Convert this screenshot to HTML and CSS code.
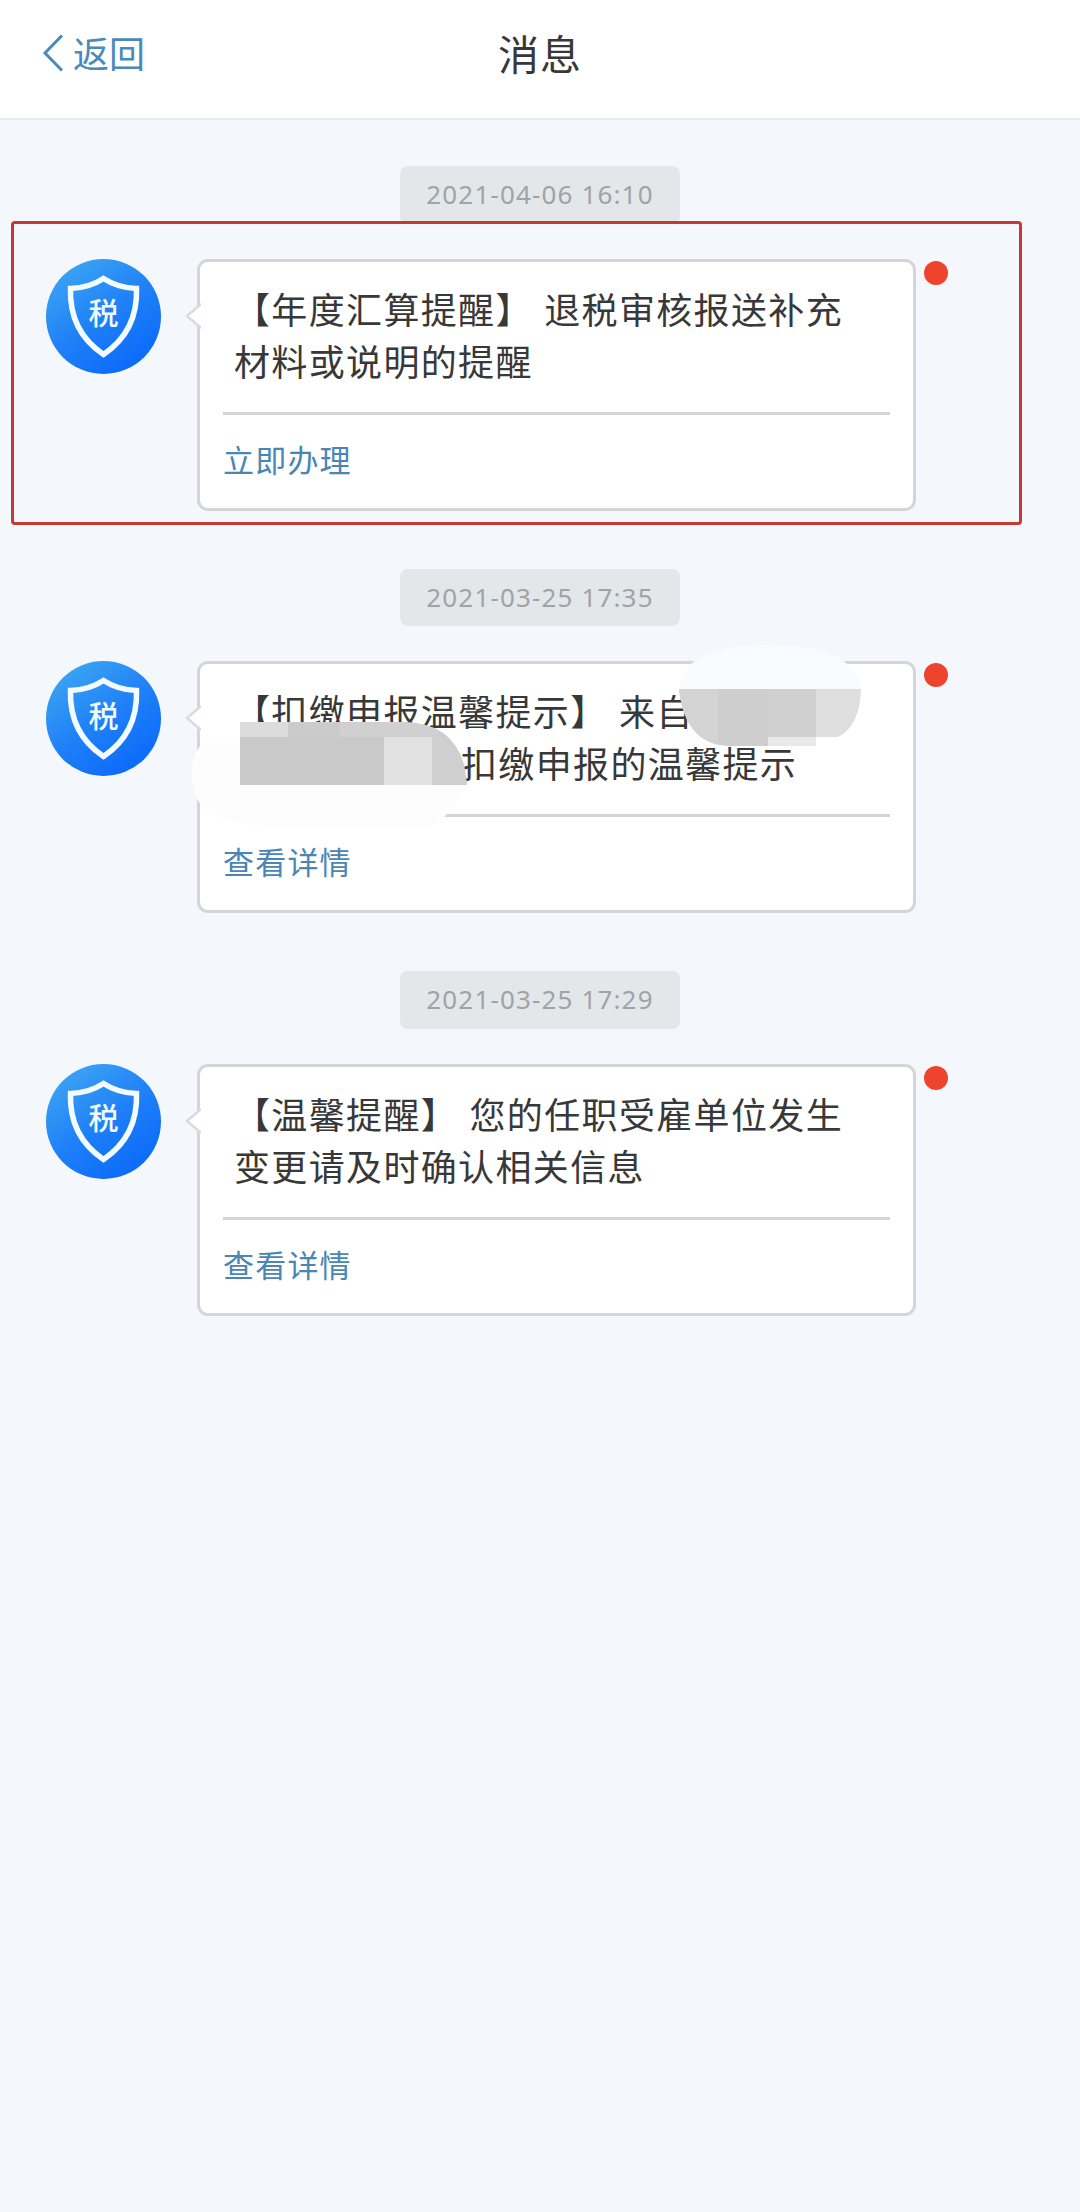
FILE: index.html
```html
<!DOCTYPE html>
<html lang="zh-CN">
<head>
<meta charset="utf-8">
<title>消息</title>
<link rel="stylesheet" href="styles.css">
</head>
<body>
<svg class="defs" width="0" height="0" aria-hidden="true">
  <defs>
    <symbol id="shield" viewBox="0 0 115 115">
      <path d="M57.5 19.5 Q72 29 90.5 29.5 Q92 72 57.5 95.5 Q23 72 24.500 29.5 Q43 29 57.5 19.500Z" fill="none" stroke="#f2fbff" stroke-width="5.500"/>
    </symbol>
  </defs>
</svg>
<header class="topbar">
  <a class="back">
    <svg class="back-icon" viewBox="0 0 22 38"><path d="M20 1.500 L3 19 L20 36.500" fill="none" stroke="currentColor" stroke-width="3"/></svg>
    <span>返回</span>
  </a>
  <h1 class="title">消息</h1>
</header>
<main class="feed">
  <section class="entry">
    <time class="stamp">2021-04-06 16:10</time>
    <div class="message">
      <div class="avatar"><svg class="shield"><use href="#shield"/></svg><span>税</span></div>
      <article class="card">
        <svg class="tail" viewBox="0 0 16 26"><path d="M16 1 L2 13 L16 25" fill="#fff" stroke="#d9dcdf" stroke-width="2.500"/></svg>
        <p class="text">【年度汇算提醒】 退税审核报送补充<br>材料或说明的提醒</p>
        <a class="action">立即办理</a>
      </article>
      <i class="unread"></i>
    </div>
    <div class="highlight"></div>
  </section>
  <section class="entry">
    <time class="stamp">2021-03-25 17:35</time>
    <div class="message">
      <div class="avatar"><svg class="shield"><use href="#shield"/></svg><span>税</span></div>
      <article class="card">
        <svg class="tail" viewBox="0 0 16 26"><path d="M16 1 L2 13 L16 25" fill="#fff" stroke="#d9dcdf" stroke-width="2.500"/></svg>
        <p class="text">【扣缴申报温馨提示】 来自<br><span class="masked-name"></span>扣缴申报的温馨提示</p>
        <a class="action">查看详情</a>
      </article>
      <i class="unread"></i>
      <svg class="mask" viewBox="180 640 700 200">
        <path d="M240 738 H206 Q184 762 196 796 Q205 819 240 824 L300 828 H430 Q455 812 466 785 H240Z" fill="#fdfdfe"/>
        <clipPath id="m1"><path d="M240 722 H402 Q452 722 464 765 L467 785 H240Z"/></clipPath>
        <g clip-path="url(#m1)">
          <rect x="240" y="722" width="228" height="63" fill="#c9c9c9"/>
          <rect x="240" y="722" width="48" height="15" fill="#dcdcdc"/>
          <rect x="288" y="722" width="52" height="15" fill="#cbcbcb"/>
          <rect x="340" y="722" width="92" height="15" fill="#d0d0d0"/>
          <rect x="384" y="737" width="48" height="48" fill="#e1e1e1"/>
          <rect x="432" y="722" width="36" height="63" fill="#cfcfcf"/>
        </g>
        <path d="M679 690 Q681 668 700 658 Q722 645 768 645 Q822 646 842 660 Q860 672 861 690Z" fill="#f9fbfe"/>
        <clipPath id="m2"><path d="M679 689 H861 Q860 726 838 737 H816 V746 H730 Q685 745 679 689Z"/></clipPath>
        <g clip-path="url(#m2)">
          <rect x="679" y="689" width="89" height="58" fill="#cecece"/>
          <rect x="679" y="689" width="39" height="58" fill="#d4d4d4"/>
          <rect x="768" y="689" width="48" height="48" fill="#d0d0d0"/>
          <rect x="768" y="737" width="48" height="10" fill="#e8e8e8"/>
          <rect x="816" y="689" width="46" height="48" fill="#dedede"/>
        </g>
      </svg>
    </div>
  </section>
  <section class="entry">
    <time class="stamp">2021-03-25 17:29</time>
    <div class="message">
      <div class="avatar"><svg class="shield"><use href="#shield"/></svg><span>税</span></div>
      <article class="card">
        <svg class="tail" viewBox="0 0 16 26"><path d="M16 1 L2 13 L16 25" fill="#fff" stroke="#d9dcdf" stroke-width="2.500"/></svg>
        <p class="text">【温馨提醒】 您的任职受雇单位发生<br>变更请及时确认相关信息</p>
        <a class="action">查看详情</a>
      </article>
      <i class="unread"></i>
    </div>
  </section>
</main>
</body>
</html>
```
FILE: styles.css
```css
* { box-sizing: border-box; }
body {
  margin: 0;
  min-height: 2212px;
  background: #f4f7fb;
  color: #383838;
  font-family: "Noto Sans CJK SC", sans-serif;
}
.defs { display: block; }
.topbar {
  display: grid;
  grid-template-columns: 1fr auto 1fr;
  align-items: center;
  height: 120px;
  padding: 0 42px 14px;
  background: #fff;
  border-bottom: 2px solid #e9ebed;
}
.back {
  display: flex;
  align-items: center;
  gap: 9px;
  color: #4a8abb;
  font-size: 36px;
  line-height: 50px;
}
.back-icon { width: 22px; height: 38px; margin-top: 2px; }
.title {
  margin: 0;
  font-size: 41px;
  font-weight: 400;
  line-height: 60px;
  letter-spacing: 1px;
}
.feed {
  display: flex;
  flex-direction: column;
  gap: 58px;
  padding-top: 46px;
}
.entry {
  position: relative;
  display: flex;
  flex-direction: column;
  gap: 35px;
  height: 344.500px;
}
.stamp {
  align-self: center;
  width: 280px;
  height: 58px;
  border-radius: 8px;
  background: #e4e7ea;
  color: #a0a3a6;
  font-family: "Noto Sans", sans-serif;
  font-size: 26px;
  line-height: 57px;
  letter-spacing: 1.150px;
  text-align: center;
}
.message {
  position: relative;
  display: flex;
  align-items: flex-start;
  padding-left: 46px;
}
.avatar {
  display: grid;
  place-items: center;
  width: 115px;
  height: 115px;
  border-radius: 50%;
  background: linear-gradient(145deg, #3fa9f2 5%, #1f80f8 50%, #0766fa 95%);
  color: #f2fbff;
  font-size: 30px;
  font-weight: 500;
  line-height: 40px;
}
.avatar > * { grid-area: 1 / 1; }
.avatar span { padding-bottom: 10px; }
.shield { width: 115px; height: 115px; }
.card {
  position: relative;
  width: 719px;
  height: 252px;
  margin-left: 36px;
  padding: 20px 23px 0;
  border: 3px solid #d3d5d7;
  border-radius: 11px;
  background: #fff;
}
.tail {
  position: absolute;
  left: -15px;
  top: 41px;
  width: 16px;
  height: 26px;
}
.text {
  height: 133px;
  margin: 0;
  padding-left: 11px;
  border-bottom: 3px solid #d3d5d7;
  font-size: 36px;
  line-height: 52px;
  letter-spacing: 1.350px;
  word-spacing: 2px;
  white-space: nowrap;
}
.masked-name {
  display: inline-block;
  width: 227px;
}
.action {
  display: block;
  padding-top: 20px;
  color: #4a86b4;
  font-size: 31px;
  line-height: 48px;
  letter-spacing: 1.200px;
}
.unread {
  width: 24px;
  height: 24px;
  margin: 2px 0 0 8px;
  border-radius: 50%;
  background: #ee442d;
}
.highlight {
  position: absolute;
  left: 11px;
  top: 55px;
  width: 1011px;
  height: 304px;
  border: 3px solid #c43a33;
  border-radius: 4px;
}
.mask {
  position: absolute;
  left: 180px;
  top: -21px;
  width: 700px;
  height: 200px;
}
```
